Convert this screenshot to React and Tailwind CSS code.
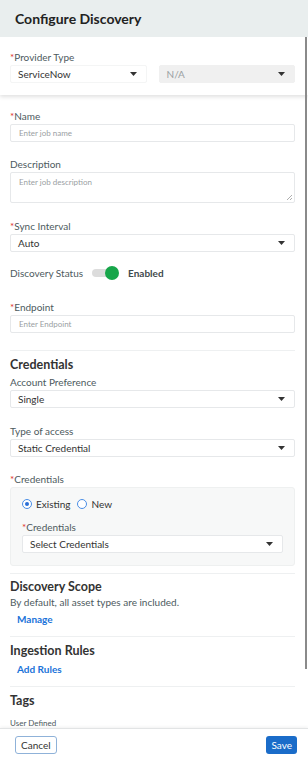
import React from "react";

const Caret = () => (
  <svg width="7" height="4" viewBox="0 0 7 4" className="shrink-0">
    <path d="M0 0h7L3.5 4z" fill="#333" />
  </svg>
);

const Label = ({ children, required }) => (
  <div className="text-[10px] leading-[12px] text-[#4d5a5e] mb-[2px]">
    {required && <span className="text-[#e0312b]">*</span>}
    {children}
  </div>
);

const Select = ({ value, muted, className = "" }) => (
  <div
    className={`h-[18px] flex items-center justify-between pl-[7px] pr-[9px] rounded-[2px] border text-[10px] leading-[12px] ${
      muted ? "bg-[#f0f0f0] text-[#9aa0a3] border-[#f0f0f0]" : "bg-white text-[#333] border-[#e6e8ea]"
    } ${className}`}
  >
    <span>{value}</span>
    <Caret />
  </div>
);

const Input = ({ placeholder }) => (
  <div className="h-[18px] flex items-center pl-[8px] rounded-[2px] border border-[#e6e8ea] text-[8px] text-[#9aa0a3]">
    {placeholder}
  </div>
);

const Divider = () => <div className="h-px bg-[#eef0f1]" />;

const Heading = ({ children, className = "" }) => (
  <div className={`text-[12.5px] font-bold text-[#333] leading-[16px] ${className}`}>{children}</div>
);

export default function App() {
  return (
    <div
      className="w-[308px] h-[760px] flex flex-col bg-white overflow-hidden"
      style={{ fontFamily: "Lato, 'Open Sans', sans-serif" }}
    >
      <div className="h-[37px] shrink-0 bg-[#e9eeee] flex items-center px-[15px]">
        <h1 className="text-[14px] font-bold text-[#222]">Configure Discovery</h1>
      </div>

      <div className="flex-1 relative overflow-hidden">
        <div className="relative z-10 bg-white pl-[10px] pr-[13px] pt-[14px] pb-[12px] shadow-[0_2px_4px_rgba(0,0,0,0.12)]">
          <Label required>Provider Type</Label>
          <div className="flex gap-[12px]">
            <Select value="ServiceNow" className="flex-1 border-[#f4f5f5]" />
            <Select value="N/A" muted className="flex-1" />
          </div>
        </div>

        <div className="pl-[10px] pr-[13px] pt-[15px] flex flex-col">
          <Label required>Name</Label>
          <Input placeholder="Enter job name" />

          <div className="mt-[16px]">
            <Label>Description</Label>
            <div className="h-[31px] relative rounded-[2px] border border-[#e6e8ea] pl-[8px] pt-[3px] text-[8px] text-[#9aa0a3]">
              Enter job description
              <svg width="6" height="6" viewBox="0 0 6 6" className="absolute right-[2px] bottom-[2px]">
                <path d="M1 6L6 1M4 6L6 4" stroke="#999" strokeWidth="0.8" />
              </svg>
            </div>
          </div>

          <div className="mt-[17px]">
            <Label required>Sync Interval</Label>
            <Select value="Auto" />
          </div>

          <div className="mt-[14px] flex items-center h-[14px]">
            <span className="text-[10px] text-[#4d5a5e]">Discovery Status</span>
            <div className="ml-[9px] relative w-[27px] h-[10px]">
              <div className="absolute left-0 top-[1px] w-[24px] h-[8px] rounded-full bg-[#dcdcdc]" />
              <div className="absolute right-0 top-[-2px] w-[14px] h-[14px] rounded-full bg-[#17a64a]" />
            </div>
            <span className="ml-[9px] text-[10px] font-bold text-[#3f4a4d]">Enabled</span>
          </div>

          <div className="mt-[21px]">
            <Label required>Endpoint</Label>
            <Input placeholder="Enter Endpoint" />
          </div>

          <div className="mt-[17px]">
            <Divider />
          </div>

          <Heading className="mt-[6px]">Credentials</Heading>
          <div className="mt-[3px]">
            <Label>Account Preference</Label>
            <Select value="Single" />
          </div>

          <div className="mt-[17px]">
            <Label>Type of access</Label>
            <Select value="Static Credential" />
          </div>

          <div className="mt-[16px]">
            <Label required>Credentials</Label>
            <div className="h-[79px] rounded-[3px] bg-[#f7f8f8] border border-[#eef0f0] px-[11px] pt-[9px]">
              <div className="flex items-center gap-[4px] text-[10px] text-[#333] h-[14px]">
                <span className="w-[10px] h-[10px] rounded-full border border-[#4a8ee6] flex items-center justify-center bg-white">
                  <span className="w-[4px] h-[4px] rounded-full bg-[#2a6fd6]" />
                </span>
                <span>Existing</span>
                <span className="ml-[3px] w-[10px] h-[10px] rounded-full border border-[#4a8ee6] bg-white" />
                <span>New</span>
              </div>
              <div className="mt-[10px]">
                <Label required>Credentials</Label>
                <Select value="Select Credentials" />
              </div>
            </div>
          </div>

          <div className="mt-[7px]">
            <Divider />
          </div>

          <Heading className="mt-[5px]">Discovery Scope</Heading>
          <div className="mt-[1px] text-[10px] text-[#4d5a5e] leading-[13px]">By default, all asset types are included.</div>
          <div className="mt-[3px] ml-[7px] text-[10px] font-bold text-[#1a73d9] leading-[14px]">Manage</div>

          <div className="mt-[10px]">
            <Divider />
          </div>

          <Heading className="mt-[6px]">Ingestion Rules</Heading>
          <div className="mt-[3px] ml-[7px] text-[10px] font-bold text-[#1a73d9] leading-[14px]">Add Rules</div>

          <div className="mt-[10px]">
            <Divider />
          </div>

          <Heading className="mt-[6px]">Tags</Heading>
          <div className="mt-[9px] text-[8px] leading-[10px] text-[#4d5a5e]">User Defined</div>
        </div>

        <div className="absolute right-[1px] top-0 w-[2px] h-[632px] bg-[#8a8a8a] z-20" />
      </div>

      <div className="h-[32px] shrink-0 border-t border-[#e2e4e5] flex items-center justify-between pl-[15px] pr-[11px] shadow-[0_-1px_3px_rgba(0,0,0,0.06)]">
        <button className="h-[18px] px-[5px] rounded-[3px] border border-[#8fb2d9] text-[10px] leading-[14px] text-[#333] bg-white">
          Cancel
        </button>
        <button className="h-[18px] px-[5px] rounded-[3px] bg-[#1a6cc9] text-[10px] leading-[14px] text-white">
          Save
        </button>
      </div>
    </div>
  );
}
